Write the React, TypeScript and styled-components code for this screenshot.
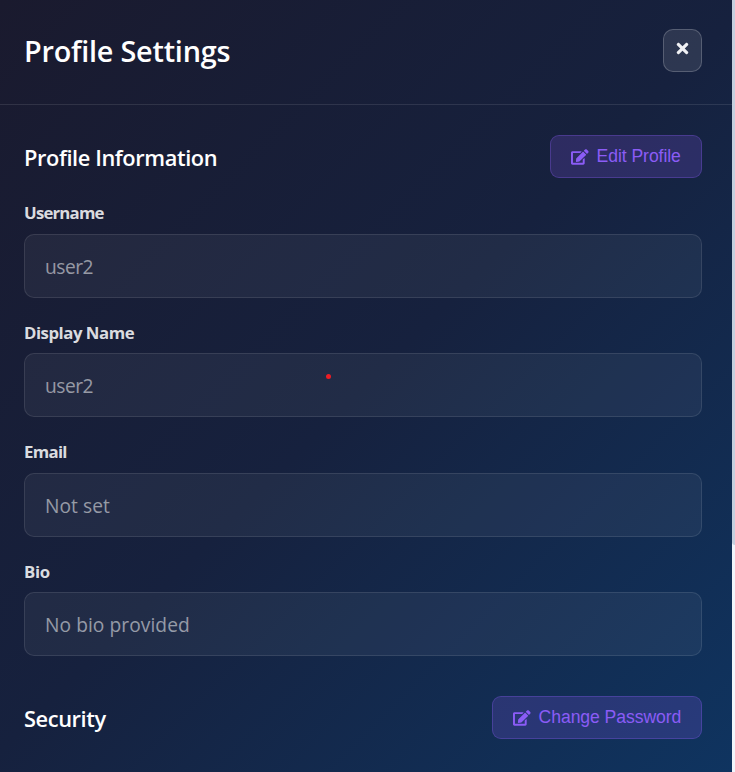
import React from "react";
import styled, { createGlobalStyle } from "styled-components";
import { FaEdit, FaTimes } from "react-icons/fa";

const GlobalStyle = createGlobalStyle`
  * { box-sizing: border-box; }
  body { margin: 0; overflow: hidden; }
`;

const Page = styled.div`
  position: relative;
  display: flex;
  height: 772px;
  width: 735px;
  font-family: "Open Sans", "Noto Sans", sans-serif;
  color: #fff;
`;

const Panel = styled.main`
  width: 732px;
  height: 772px;
  background: linear-gradient(135deg, #1a1a2e 0%, #16213e 50%, #0f3460 100%);
`;

const ScrollTrack = styled.div`
  width: 3px;
  background: #f1f5fb;
`;

const ScrollThumb = styled.div`
  height: 545px;
  background: #c5d0df;
  border-radius: 0 0 0 3px;
`;

const Header = styled.header`
  display: flex;
  justify-content: space-between;
  height: 105px;
  padding: 29px 30px 0 24px;
  border-bottom: 1px solid rgba(255, 255, 255, 0.1);
`;

const Title = styled.h1`
  margin: 2px 0 0;
  font-size: 28.8px;
  line-height: 40px;
  font-weight: 600;
  letter-spacing: -0.22px;
`;

const CloseButton = styled.button`
  display: flex;
  align-items: center;
  justify-content: center;
  width: 39px;
  height: 43px;
  padding: 0 0 4px;
  color: #f0f1f4;
  background: rgba(255, 255, 255, 0.1);
  border: 1px solid rgba(255, 255, 255, 0.2);
  border-radius: 10px;
  font-size: 17px;

  svg { margin-right: 1px; }
`;

const Section = styled.section`
  padding: 30px 30px 0 24px;
`;

const SecuritySection = styled(Section)`
  padding-top: 40px;
`;

const SectionHeader = styled.div`
  display: flex;
  justify-content: space-between;
  height: 43px;
`;

const SectionTitle = styled.h2`
  margin: 3px 0 0;
  font-size: 21.8px;
  line-height: 40px;
  font-weight: 600;
  letter-spacing: -0.4px;
`;

const ActionButton = styled.button<{ $width: number }>`
  display: flex;
  align-items: center;
  gap: 8px;
  width: ${(p) => p.$width}px;
  height: 43px;
  padding: 0 0 0 20px;
  color: #8b5cf6;
  background: rgba(139, 92, 246, 0.2);
  border: 1px solid rgba(139, 92, 246, 0.3);
  border-radius: 9px;
  font-family: "Liberation Sans", Arial, sans-serif;
  font-size: 17.6px;
  letter-spacing: -0.07px;
  white-space: nowrap;

  svg { flex: none; width: 17.6px; height: 16px; margin-top: 1px; }
  span { margin-top: -1px; }
`;

const Fields = styled.div`
  display: grid;
  grid-auto-rows: 119.4px;
  height: 478px;
`;

const Label = styled.div<{ $tracking: number }>`
  height: 56px;
  padding-top: 23.4px;
  font-size: 16.8px;
  line-height: 24px;
  font-weight: 700;
  letter-spacing: ${(p) => p.$tracking}px;
  color: rgba(255, 255, 255, 0.86);
`;

const Value = styled.div<{ $tracking: number }>`
  height: 64px;
  padding: 0 20px;
  font-size: 19.2px;
  line-height: 64px;
  letter-spacing: ${(p) => p.$tracking}px;
  color: rgba(255, 255, 255, 0.53);
  background: rgba(255, 255, 255, 0.05);
  border: 1px solid rgba(255, 255, 255, 0.1);
  border-radius: 10px;
`;

const PointerDot = styled.i`
  position: absolute;
  left: 325.5px;
  top: 374px;
  width: 5px;
  height: 5px;
  border-radius: 50%;
  background: #ed1c24;
`;

const fields = [
  { label: "Username", value: "user2", labelTracking: -0.8, valueTracking: -0.5 },
  { label: "Display Name", value: "user2", labelTracking: -0.48, valueTracking: -0.5 },
  { label: "Email", value: "Not set", labelTracking: -0.7, valueTracking: 0.05 },
  { label: "Bio", value: "No bio provided", labelTracking: -0.3, valueTracking: 0.06 },
];

export default function App() {
  return (
    <>
      <GlobalStyle />
      <Page>
        <Panel>
          <Header>
            <Title>Profile Settings</Title>
            <CloseButton aria-label="Close"><FaTimes /></CloseButton>
          </Header>
          <Section>
            <SectionHeader>
              <SectionTitle>Profile Information</SectionTitle>
              <ActionButton $width={152}><FaEdit /><span>Edit Profile</span></ActionButton>
            </SectionHeader>
            <Fields>
              {fields.map((f) => (
                <div key={f.label}>
                  <Label $tracking={f.labelTracking}>{f.label}</Label>
                  <Value $tracking={f.valueTracking}>{f.value}</Value>
                </div>
              ))}
            </Fields>
          </Section>
          <SecuritySection>
            <SectionHeader>
              <SectionTitle>Security</SectionTitle>
              <ActionButton $width={210}><FaEdit /><span>Change Password</span></ActionButton>
            </SectionHeader>
          </SecuritySection>
        </Panel>
        <ScrollTrack><ScrollThumb /></ScrollTrack>
        <PointerDot />
      </Page>
    </>
  );
}
